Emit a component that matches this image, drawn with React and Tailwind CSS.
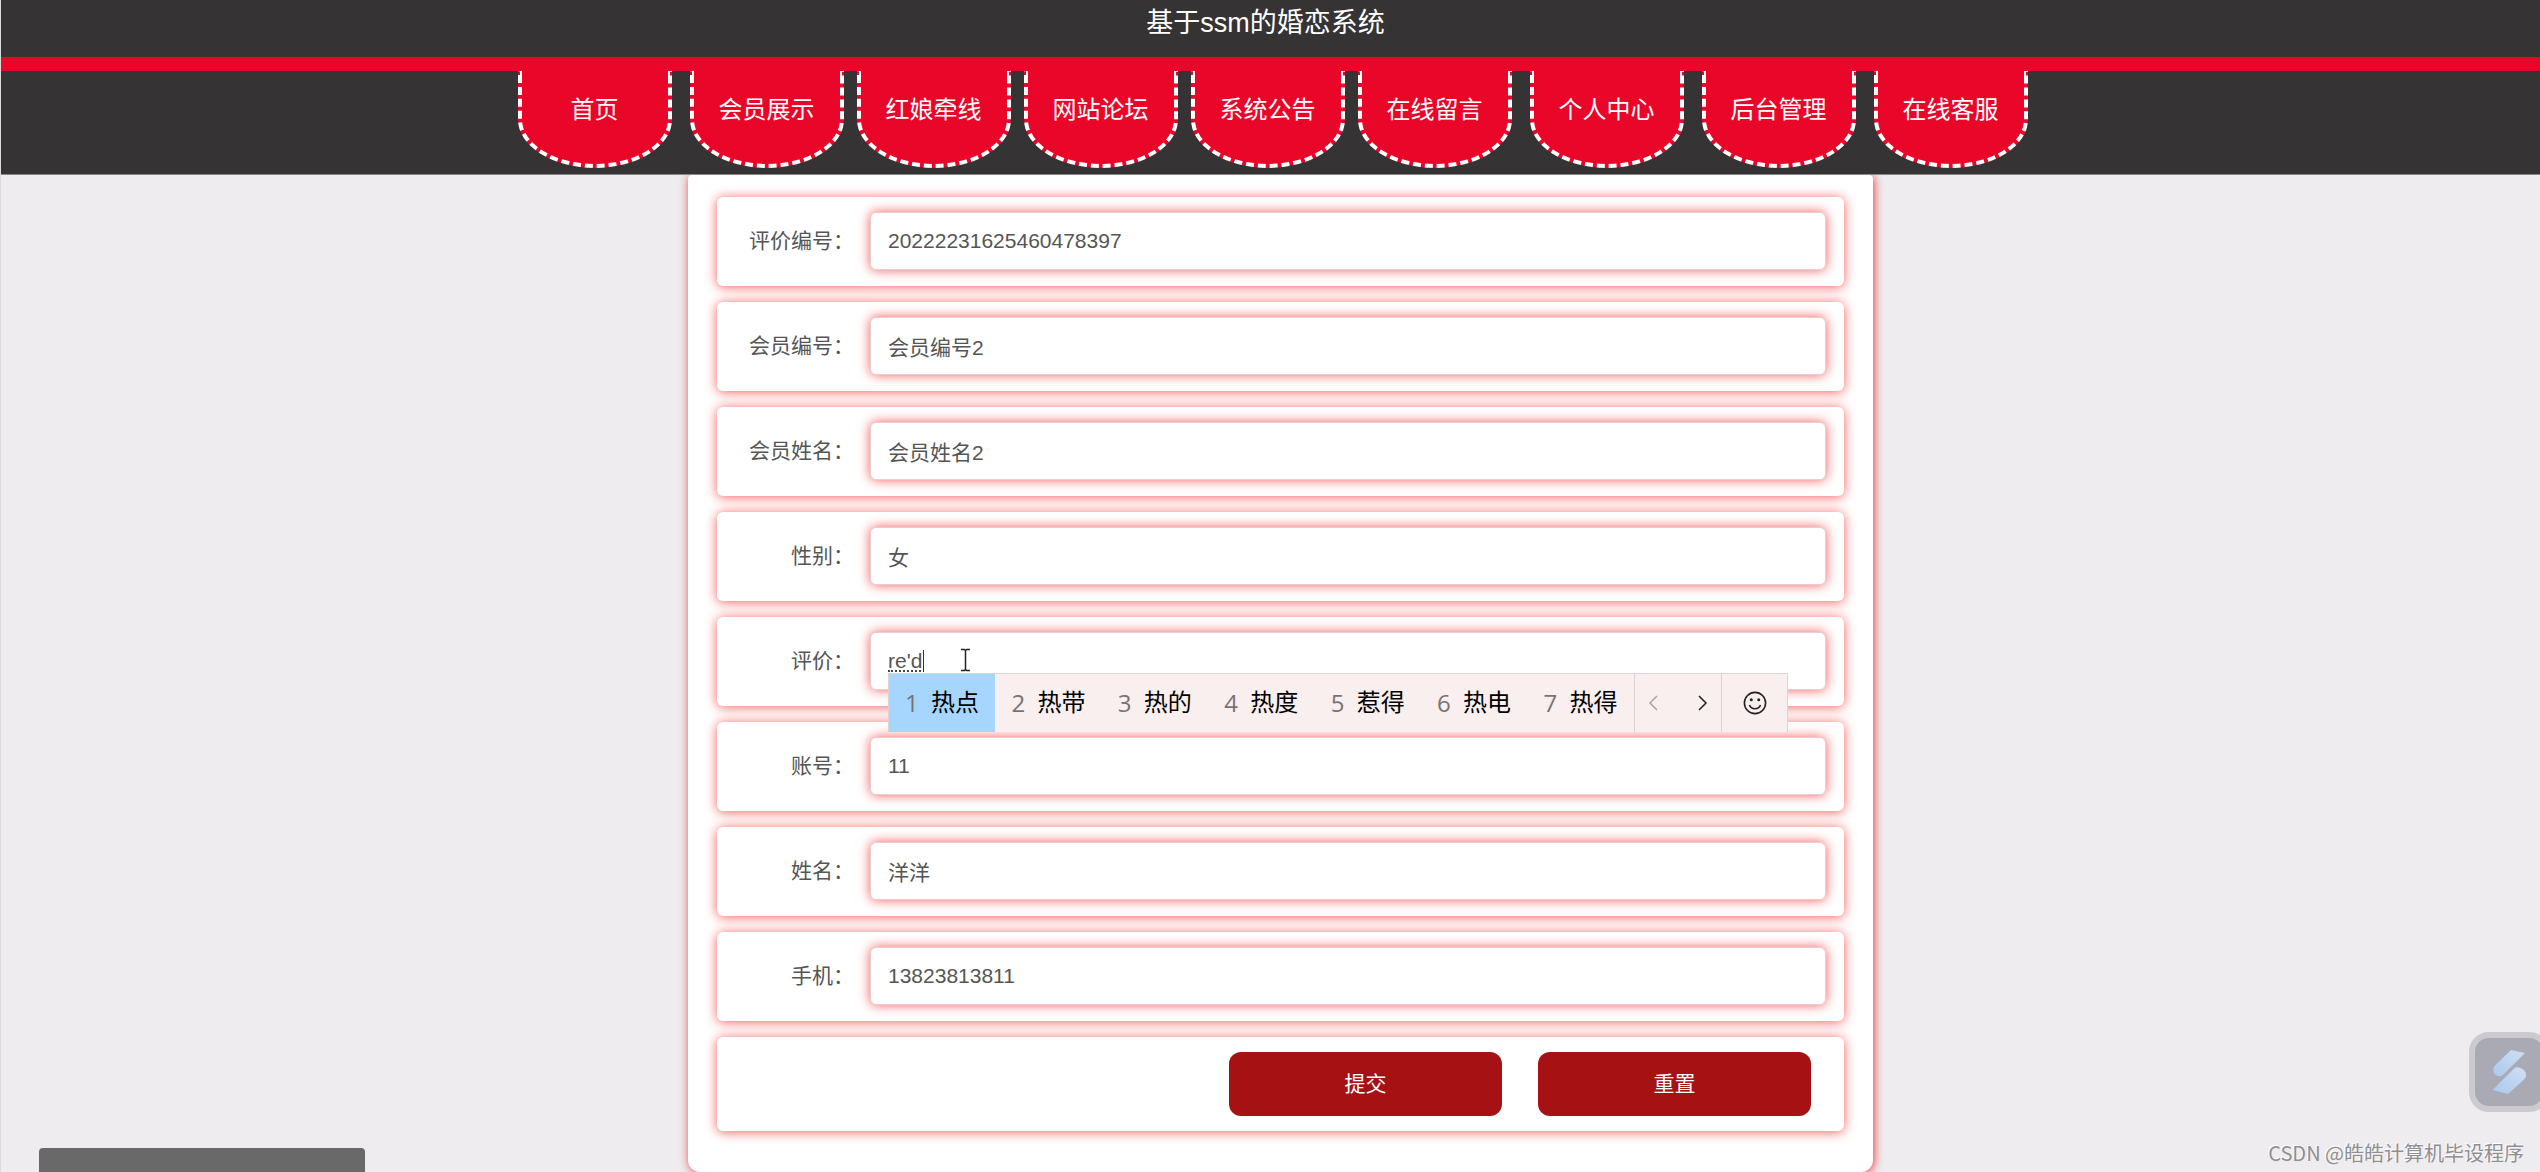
import { useState } from "react";

const menu = [
  { title: "首页", wide: true },
  { title: "会员展示" },
  { title: "红娘牵线" },
  { title: "网站论坛" },
  { title: "系统公告" },
  { title: "在线留言", wide: true },
  { title: "个人中心", wide: true },
  { title: "后台管理", wide: true },
  { title: "在线客服", last: true },
];

const fields = [
  { name: "pingjiabianhao", label: "评价编号：", value: "20222231625460478397" },
  { name: "huiyuanbianhao", label: "会员编号：", value: "会员编号2" },
  { name: "huiyuanxingming", label: "会员姓名：", value: "会员姓名2" },
  { name: "xingbie", label: "性别：", value: "女" },
  { name: "pingjia", label: "评价：", value: "re'd", composing: true },
  { name: "zhanghao", label: "账号：", value: "11" },
  { name: "xingming", label: "姓名：", value: "洋洋" },
  { name: "shouji", label: "手机：", value: "13823813811" },
];

const candidates = ["热点", "热带", "热的", "热度", "惹得", "热电", "热得"];

const rowClass =
  "flex rounded-md bg-white shadow-[0_1px_12px_rgba(245,35,35,0.75)]";

function Header() {
  return (
    <header className="relative z-10 border-b border-[#8a8889] bg-[#353334] text-white">
      <h1 className="h-[57px] pr-[10px] text-center text-[27px] leading-[46px]">
        基于ssm的婚恋系统
      </h1>
      <nav className="h-[117px] border-t-[14px] border-[#e90629] pl-[4px]">
        <ul className="flex justify-center">
          {menu.map((item) => (
            <li
              key={item.title}
              className={
                item.last ? "" : item.wide ? "mr-[18px]" : "mr-[13px]"
              }
            >
              <a
                href="#"
                className="block h-[97px] w-[154px] rounded-b-[50%] border-4 border-t-0 border-dashed border-white bg-[#e90629] text-center text-[24px] leading-[77px]"
              >
                {item.title}
              </a>
            </li>
          ))}
        </ul>
      </nav>
    </header>
  );
}

function CandidateBar() {
  return (
    <div className="absolute top-[41px] left-[18px] z-10 flex h-[59px] w-[900px] border border-b-0 border-[#dbd3d5] bg-[#f9efef]">
      <ol className="flex flex-1">
        {candidates.map((word, i) => (
          <li
            key={word}
            className={
              "flex flex-1 items-center pl-4 text-[24px] text-black " +
              (i === 0 ? "bg-[#a6d6fe]" : "")
            }
          >
            <span className="w-[26px] font-['Open_Sans',sans-serif] text-[#777375]">
              {i + 1}
            </span>
            {word}
          </li>
        ))}
      </ol>
      <div className="flex w-[87px] items-center justify-between border-l border-[#dbd3d5] px-[13px]">
        <button type="button" aria-label="上一页">
          <svg width="10" height="16" viewBox="0 0 10 16" fill="none" stroke="#aaa4a6" strokeWidth="1.5">
            <path d="M9 1L2 8l7 7" />
          </svg>
        </button>
        <button type="button" aria-label="下一页">
          <svg width="10" height="16" viewBox="0 0 10 16" fill="none" stroke="#222" strokeWidth="1.5">
            <path d="M1 1l7 7-7 7" />
          </svg>
        </button>
      </div>
      <button
        type="button"
        aria-label="表情"
        className="flex w-[66px] items-center justify-center border-l border-[#dbd3d5]"
      >
        <svg width="24" height="24" viewBox="0 0 24 24" fill="none" stroke="#222" strokeWidth="1.6">
          <circle cx="12" cy="12" r="10.6" />
          <path d="M6.5 14c1 2.6 3 3.8 5.5 3.8s4.5-1.2 5.5-3.8" />
          <circle cx="8.3" cy="8.8" r="1.5" fill="#222" stroke="none" />
          <circle cx="15.7" cy="8.8" r="1.5" fill="#222" stroke="none" />
        </svg>
      </button>
    </div>
  );
}

function Field({ field }) {
  const [value, setValue] = useState(field.value);

  return (
    <div className={rowClass + " gap-4 pt-[15px] pr-[18px] pb-4"}>
      <label
        htmlFor={field.name}
        className="w-[137px] text-right text-[21px] leading-[58px] whitespace-nowrap"
      >
        {field.label}
      </label>
      <div className="relative flex-1">
        <input
          id={field.name}
          type="text"
          value={value}
          onChange={(e) => setValue(e.target.value)}
          className="block h-[58px] w-full rounded-md border border-[#e9cdd3] bg-white px-[17px] text-[21px] shadow-[0_0_12px_rgba(245,35,35,0.75)] outline-none"
        />
        {field.composing && (
          <>
            {/* text that is still being typed, with its caret */}
            <span className="absolute top-[18px] left-[18px] h-[22px] w-[36px] border-r border-[#333]" />
            <span className="absolute top-[38px] left-[18px] w-[33px] border-b-2 border-dotted border-[#444]" />
            <svg
              className="absolute top-[16px] left-[90px]"
              width="11"
              height="24"
              viewBox="0 0 11 24"
              fill="none"
              stroke="#222"
              strokeWidth="1.5"
            >
              <path d="M1 1.5h3.5l1 1 1-1H10M5.5 2.5v19M1 22.5h3.5l1-1 1 1H10" />
            </svg>
            <CandidateBar />
          </>
        )}
      </div>
    </div>
  );
}

function FloatingLogo() {
  return (
    <div className="absolute right-[-9px] bottom-[60px] size-20 rounded-[20px] border-[6px] border-[#cbcacf] bg-[#a9aab3]">
      <svg width="68" height="68" viewBox="0 0 68 68">
        <defs>
          <linearGradient id="blade" x1="1" y1="0" x2="0" y2="1">
            <stop offset="0" stopColor="#cfdff2" />
            <stop offset="1" stopColor="#abc9ee" />
          </linearGradient>
        </defs>
        <path
          fill="url(#blade)"
          d="M36 12l14 3-21 21c-2 2-4 2.500-6 2-4-1-6-5-4-9 .5-1 1-1.500 2-2.500z"
        />
        <path
          fill="url(#blade)"
          d="M17.500 52l21-21c1.500-1.500 3-2 5-1.500 6 1 9 6 7 10l-1.500 2L33 56z"
        />
      </svg>
    </div>
  );
}

export default function App() {
  return (
    <div className="relative flex h-screen flex-col overflow-hidden border-l border-[#dcdadd] bg-[#eeecef] font-['Liberation_Sans','Noto_Sans_CJK_SC',sans-serif] text-[#555]">
      <Header />

      <main className="pl-[20px]">
        <form
          onSubmit={(e) => e.preventDefault()}
          className="mx-auto flex w-full max-w-[1185px] flex-col gap-4 rounded-t-sm rounded-b-xl bg-white px-[29px] pt-[22px] pb-[41px] shadow-[1px_1px_10px_rgba(240,20,20,0.85)]"
        >
          {fields.map((field) => (
            <Field key={field.name} field={field} />
          ))}

          <div className={rowClass + " justify-end gap-9 py-[15px] pr-[33px]"}>
            <button
              type="submit"
              className="h-16 w-[273px] rounded-xl bg-[#a61214] text-[21px] text-white"
            >
              提交
            </button>
            <button
              type="reset"
              className="h-16 w-[273px] rounded-xl bg-[#a61214] text-[21px] text-white"
            >
              重置
            </button>
          </div>
        </form>
      </main>

      <FloatingLogo />
      <div className="absolute bottom-0 left-[38px] h-6 w-[326px] rounded-t bg-[#696969]" />
      <p className="absolute right-4 bottom-1 font-['Noto_Sans_CJK_SC',sans-serif] text-[20px] leading-[30px] text-[#8f8e91] [text-shadow:-1px_-1px_0_#fff]">
        CSDN @皓皓计算机毕设程序
      </p>
    </div>
  );
}
